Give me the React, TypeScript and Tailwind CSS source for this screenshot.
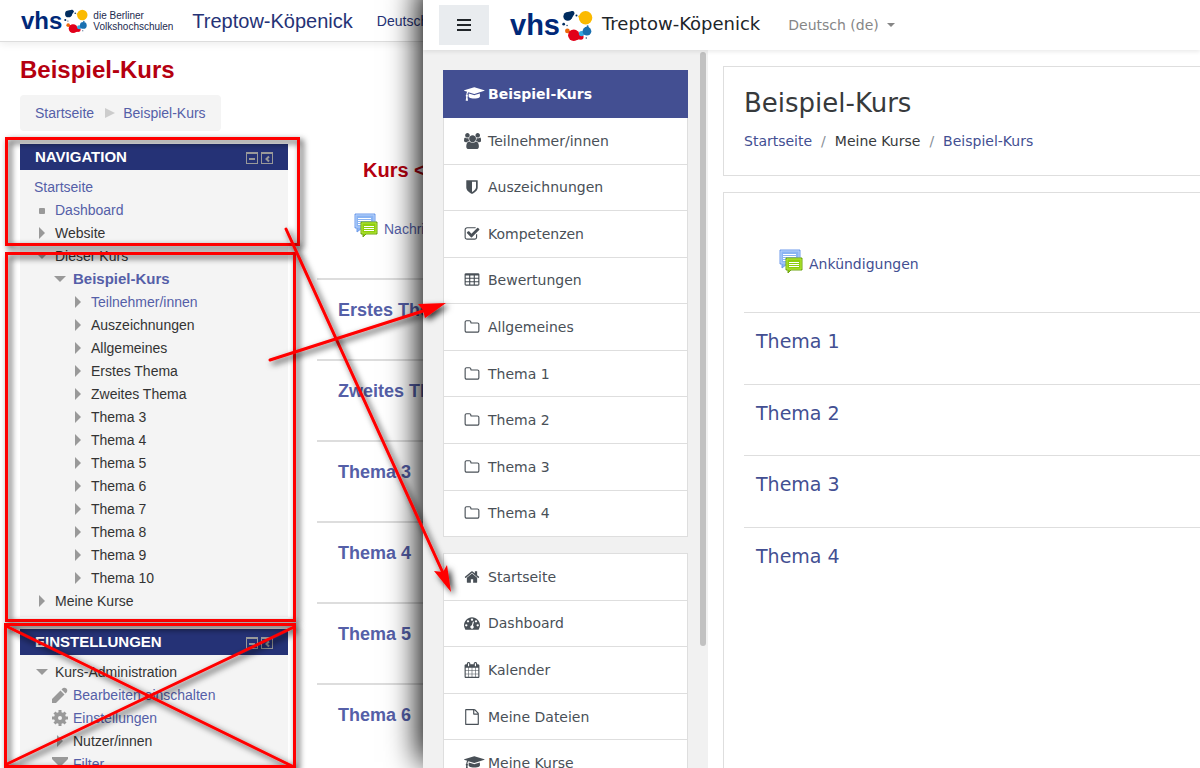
import type { ReactNode } from 'react';

/* ---------- icons ---------- */

interface Glyph {
  width: number;
  path: string;
}

const GLYPHS: Record<string, Glyph> = {
  cap: {
    width: 2304,
    path: 'M1774 836l18 316q4 69-82 128t-235 93.5-323 34.5-323-34.5-235-93.5-82-128l18-316 574 181q22 7 48 7t48-7zm530-324q0 23-22 31l-1120 352q-4 1-10 1t-10-1l-652-206q-43 34-71 111.5t-34 178.5q63 36 63 109 0 69-58 107l58 433q2 14-8 25-9 11-24 11h-192q-15 0-24-11-10-11-8-25l58-433q-58-38-58-107 0-73 65-111 11-207 98-330l-333-104q-22-8-22-31t22-31l1120-352q4-1 10-1t10 1l1120 352q22 8 22 31z',
  },
  users: {
    width: 1920,
    path: 'M593 896q-162 5-265 128h-134q-82 0-138-40.5t-56-118.5q0-353 124-353 6 0 43.5 21t97.5 42.5 119 21.5q67 0 133-23-5 37-5 66 0 139 81 256zm1071 637q0 120-73 189.5t-194 69.5h-874q-121 0-194-69.5t-73-189.5q0-53 3.5-103.5t14-109 26.5-108.5 43-97.5 62-81 85.5-53.5 111.5-20q10 0 43 21.5t73 48 107 48 135 21.5 135-21.5 107-48 73-48 43-21.5q61 0 111.5 20t85.5 53.5 62 81 43 97.5 26.5 108.5 14 109 3.5 103.5zm-1024-1277q0 106-75 181t-181 75-181-75-75-181 75-181 181-75 181 75 75 181zm704 384q0 159-112.5 271.5t-271.5 112.5-271.5-112.5-112.5-271.5 112.5-271.5 271.5-112.5 271.5 112.5 112.5 271.5zm576 225q0 78-56 118.5t-138 40.5h-134q-103-123-265-128 81-117 81-256 0-29-5-66 66 23 133 23 59 0 119-21.5t97.5-42.5 43.5-21q124 0 124 353zm-128-609q0 106-75 181t-181 75-181-75-75-181 75-181 181-75 181 75 75 181z',
  },
  shield: {
    width: 1792,
    path: 'M1344 960v-640h-448v1137q119-63 213-137 235-184 235-360zm192-768v768q0 86-33.5 170.5t-83 150-118 127.5-126.5 103-121 77.5-89.5 49.5-42.5 20q-12 6-26 6t-26-6q-16-7-42.5-20t-89.5-49.5-121-77.5-126.5-103-118-127.5-83-150-33.5-170.5v-768q0-26 19-45t45-19h1152q26 0 45 19t19 45z',
  },
  check: {
    width: 1792,
    path: 'M1472 930v318q0 119-84.5 203.5t-203.5 84.5h-832q-119 0-203.5-84.5t-84.5-203.5v-832q0-119 84.5-203.5t203.5-84.5h832q63 0 117 25 15 7 18 23 3 17-9 29l-49 49q-10 10-23 10-3 0-9-2-23-6-45-6h-832q-66 0-113 47t-47 113v832q0 66 47 113t113 47h832q66 0 113-47t47-113v-254q0-13 9-22l64-64q10-10 23-10 6 0 12 3 20 8 20 29zm231-489l-814 814q-24 24-57 24t-57-24l-430-430q-24-24-24-57t24-57l110-110q24-24 57-24t57 24l263 263 647-647q24-24 57-24t57 24l110 110q24 24 24 57t-24 57z',
  },
  table: {
    width: 1792,
    path: 'M576 1376v-192q0-14-9-23t-23-9h-320q-14 0-23 9t-9 23v192q0 14 9 23t23 9h320q14 0 23-9t9-23zm0-384v-192q0-14-9-23t-23-9h-320q-14 0-23 9t-9 23v192q0 14 9 23t23 9h320q14 0 23-9t9-23zm512 384v-192q0-14-9-23t-23-9h-320q-14 0-23 9t-9 23v192q0 14 9 23t23 9h320q14 0 23-9t9-23zm-512-768v-192q0-14-9-23t-23-9h-320q-14 0-23 9t-9 23v192q0 14 9 23t23 9h320q14 0 23-9t9-23zm512 384v-192q0-14-9-23t-23-9h-320q-14 0-23 9t-9 23v192q0 14 9 23t23 9h320q14 0 23-9t9-23zm512 384v-192q0-14-9-23t-23-9h-320q-14 0-23 9t-9 23v192q0 14 9 23t23 9h320q14 0 23-9t9-23zm-512-768v-192q0-14-9-23t-23-9h-320q-14 0-23 9t-9 23v192q0 14 9 23t23 9h320q14 0 23-9t9-23zm512 384v-192q0-14-9-23t-23-9h-320q-14 0-23 9t-9 23v192q0 14 9 23t23 9h320q14 0 23-9t9-23zm0-384v-192q0-14-9-23t-23-9h-320q-14 0-23 9t-9 23v192q0 14 9 23t23 9h320q14 0 23-9t9-23zm128-320v1088q0 66-47 113t-113 47h-1344q-66 0-113-47t-47-113v-1088q0-66 47-113t113-47h1344q66 0 113 47t47 113z',
  },
  folder: {
    width: 1792,
    path: 'M1600 1312v-704q0-40-28-68t-68-28h-704q-40 0-68-28t-28-68v-64q0-40-28-68t-68-28h-320q-40 0-68 28t-28 68v960q0 40 28 68t68 28h1216q40 0 68-28t28-68zm128-704v704q0 92-66 158t-158 66h-1216q-92 0-158-66t-66-158v-960q0-92 66-158t158-66h320q92 0 158 66t66 158v32h672q92 0 158 66t66 158z',
  },
  home: {
    width: 1792,
    path: 'M1472 992v480q0 26-19 45t-45 19h-384v-384h-256v384h-384q-26 0-45-19t-19-45v-480q0-1 .5-3t.5-3l575-474 575 474q1 2 1 6zm223-69l-62 74q-8 9-21 11h-3q-13 0-21-7l-692-577-692 577q-12 8-24 7-13-2-21-11l-62-74q-8-10-7-23.5t11-21.5l719-599q32-26 76-26t76 26l244 204v-195q0-14 9-23t23-9h192q14 0 23 9t9 23v408l219 182q10 8 11 21.5t-7 23.5z',
  },
  dashboard: {
    width: 1792,
    path: 'M384 1152q0-53-37.5-90.5t-90.5-37.5-90.5 37.5-37.5 90.5 37.5 90.5 90.5 37.5 90.5-37.5 37.5-90.5zm192-448q0-53-37.5-90.5t-90.5-37.5-90.5 37.5-37.5 90.5 37.5 90.5 90.5 37.5 90.5-37.5 37.5-90.5zm428 481l101-382q6-26-7.5-48.5t-38.5-29.5-48 6.5-30 39.5l-101 382q-60 5-107 43.5t-63 98.5q-20 77 20 146t117 89 146-20 89-117q16-60-6-117t-72-91zm660-33q0-53-37.5-90.5t-90.5-37.5-90.5 37.5-37.5 90.5 37.5 90.5 90.5 37.5 90.5-37.5 37.5-90.5zm-640-640q0-53-37.5-90.5t-90.5-37.5-90.5 37.5-37.5 90.5 37.5 90.5 90.5 37.5 90.5-37.5 37.5-90.5zm448 192q0-53-37.5-90.5t-90.5-37.5-90.5 37.5-37.5 90.5 37.5 90.5 90.5 37.5 90.5-37.5 37.5-90.5zm320 448q0 261-141 483-19 29-54 29h-1402q-35 0-54-29-141-221-141-483 0-182 71-348t191-286 286-191 348-71 348 71 286 191 191 286 71 348z',
  },
  calendar: {
    width: 1792,
    path: 'M192 1664h288v-288h-288v288zm352 0h320v-288h-320v288zm-352-352h288v-320h-288v320zm352 0h320v-320h-320v320zm-352-384h288v-288h-288v288zm736 736h320v-288h-320v288zm-384-736h320v-288h-320v288zm768 736h288v-288h-288v288zm-384-352h320v-320h-320v320zm-352-864v-288q0-13-9.5-22.5t-22.5-9.5h-64q-13 0-22.5 9.5t-9.5 22.5v288q0 13 9.5 22.5t22.5 9.5h64q13 0 22.5-9.5t9.5-22.5zm736 864h288v-320h-288v320zm-384-384h320v-288h-320v288zm384 0h288v-288h-288v288zm32-480v-288q0-13-9.5-22.5t-22.5-9.5h-64q-13 0-22.5 9.5t-9.5 22.5v288q0 13 9.5 22.5t22.5 9.5h64q13 0 22.5-9.5t9.5-22.5zm384-64v1280q0 52-38 90t-90 38h-1408q-52 0-90-38t-38-90v-1280q0-52 38-90t90-38h128v-96q0-66 47-113t113-47h64q66 0 113 47t47 113v96h384v-96q0-66 47-113t113-47h64q66 0 113 47t47 113v96h128q52 0 90 38t38 90z',
  },
  file: {
    width: 1792,
    path: 'M1596 380q28 28 48 76t20 88v1152q0 40-28 68t-68 28h-1344q-40 0-68-28t-28-68v-1600q0-40 28-68t68-28h896q40 0 88 20t76 48zm-444-244v376h376q-10-29-22-41l-313-313q-12-12-41-22zm384 1528v-1024h-416q-40 0-68-28t-28-68v-416h-768v1536h1280z',
  },
};

function Icon({ name }: { name: string }) {
  const { width, path } = GLYPHS[name];
  return (
    <span className="flex h-4 w-4 shrink-0 items-center" aria-hidden="true">
      <svg viewBox={`0 0 ${width} 1792`} className="h-4 w-auto max-w-none shrink-0" fill="currentColor">
        <path d={path} />
      </svg>
    </span>
  );
}

function LogoDots({ className }: { className: string }) {
  return (
    <svg viewBox="0 0 92 92" className={className} aria-hidden="true">
      <g fill="#002c5f">
        <circle cx="17" cy="19" r="13" />
        <circle cx="31" cy="9" r="6" />
        <path d="M17 6L31 3l6 8-9 16z" />
        <circle cx="43" cy="16" r="3" />
        <circle cx="5" cy="42" r="4" />
        <circle cx="15" cy="46" r="2" />
        <circle cx="72" cy="83" r="2" />
      </g>
      <circle cx="51" cy="19" r="3" fill="#fbba00" />
      <circle cx="70" cy="23" r="20" fill="#fbba00" />
      <circle cx="16" cy="62" r="7" fill="#ec6608" />
      <path d="M35 60l-16 2 6 12z" fill="#ec6608" />
      <g fill="#e2001a">
        <circle cx="35" cy="75" r="17" />
        <circle cx="56" cy="80" r="8" />
        <path d="M45 66l14 8-6 13-12 2z" />
      </g>
      <circle cx="58" cy="70" r="8" fill="#36a9e1" />
      <circle cx="74" cy="63" r="13" fill="#1a70b0" />
      <circle cx="76" cy="48" r="3" fill="#1a70b0" />
    </svg>
  );
}

function ForumIcon() {
  return (
    <svg viewBox="0 0 24 24" className="h-6 w-6 shrink-0" aria-hidden="true">
      <path d="M1 1h20v14H8l-5 4v-4H1z" fill="#8ab4f3" stroke="#6e9bea" />
      <path d="M2 2h18v12H2z" fill="none" stroke="#b5d0fa" />
      <path d="M4 5.500h13M4 7.500h13M4 9.500h4M4 11.500h3" stroke="#fff" />
      <path d="M7 9h16v12H12l-3 3v-3H7z" fill="#8fce0c" stroke="#6ea314" />
      <path d="M8 10h14v10H8z" fill="none" stroke="#b4e63c" />
      <path d="M10 13.500h10M10 15.500h10M10 17.500h10" stroke="#fff" />
    </svg>
  );
}

type Marker = 'open' | 'closed' | 'dot' | 'pen' | 'cog' | 'filter';

function TreeMarker({ kind }: { kind: Marker }) {
  if (kind === 'pen' || kind === 'cog' || kind === 'filter') {
    return (
      <svg viewBox="0 0 16 16" className="h-4 w-4" fill="#999" aria-hidden="true">
        {kind === 'pen' && (
          <>
            <path d="M0 16v-4l8.500-8.500 4 4L4 16z" />
            <path d="M9.500 2.500l1.500-1.500a3 3 0 0 1 4 4l-1.500 1.500z" />
          </>
        )}
        {kind === 'cog' && (
          <g fill="none" stroke="#999">
            <circle cx="8" cy="8" r="4" strokeWidth="4" />
            <path d="M8 0v4M8 12v4M0 8h4M12 8h4M2.500 2.500l3 3M10.500 10.500l3 3M13.500 2.500l-3 3M5.500 10.500l-3 3" strokeWidth="3" />
          </g>
        )}
        {kind === 'filter' && <path d="M0 1h16v2l-6 6v7H6V9L0 3z" />}
      </svg>
    );
  }
  return (
    <svg viewBox="0 0 12 12" className="h-3 w-3" fill="#999" aria-hidden="true">
      {kind === 'open' && <path d="M0 3h12L6 9z" />}
      {kind === 'closed' && <path d="M3 0v12l6-6z" />}
      {kind === 'dot' && <rect x="3" y="4" width="6" height="6" rx="1" />}
    </svg>
  );
}

/* ---------- old course page ---------- */

interface TreeItem {
  label: string;
  level: number;
  marker?: Marker;
  link?: boolean;
  bold?: boolean;
}

const NAV_TREE: TreeItem[] = [
  { label: 'Startseite', level: 0, link: true },
  { label: 'Dashboard', level: 1, marker: 'dot', link: true },
  { label: 'Website', level: 1, marker: 'closed' },
  { label: 'Dieser Kurs', level: 1, marker: 'open' },
  { label: 'Beispiel-Kurs', level: 2, marker: 'open', link: true, bold: true },
  { label: 'Teilnehmer/innen', level: 3, marker: 'closed', link: true },
  { label: 'Auszeichnungen', level: 3, marker: 'closed' },
  { label: 'Allgemeines', level: 3, marker: 'closed' },
  { label: 'Erstes Thema', level: 3, marker: 'closed' },
  { label: 'Zweites Thema', level: 3, marker: 'closed' },
  { label: 'Thema 3', level: 3, marker: 'closed' },
  { label: 'Thema 4', level: 3, marker: 'closed' },
  { label: 'Thema 5', level: 3, marker: 'closed' },
  { label: 'Thema 6', level: 3, marker: 'closed' },
  { label: 'Thema 7', level: 3, marker: 'closed' },
  { label: 'Thema 8', level: 3, marker: 'closed' },
  { label: 'Thema 9', level: 3, marker: 'closed' },
  { label: 'Thema 10', level: 3, marker: 'closed' },
  { label: 'Meine Kurse', level: 1, marker: 'closed' },
];

const SETTINGS_TREE: TreeItem[] = [
  { label: 'Kurs-Administration', level: 1, marker: 'open' },
  { label: 'Bearbeiten einschalten', level: 2, marker: 'pen', link: true },
  { label: 'Einstellungen', level: 2, marker: 'cog', link: true },
  { label: 'Nutzer/innen', level: 2, marker: 'closed' },
  { label: 'Filter', level: 2, marker: 'filter', link: true },
];

const INDENT = ['pl-[14px]', 'pl-3', 'pl-[30px]', 'pl-12'];

function Tree({ items }: { items: TreeItem[] }) {
  return (
    <ul className="pt-[5px] pb-[5px]">
      {items.map((item) => (
        <li key={item.label} className={`flex h-[23px] items-center whitespace-nowrap ${INDENT[item.level]}`}>
          {item.marker && (
            <span className="mr-[3px] flex w-5 justify-center">
              <TreeMarker kind={item.marker} />
            </span>
          )}
          {item.link ? (
            <a href="#" className={item.bold ? 'text-[15px] font-bold text-[#555fa8]' : 'text-[#555fa8]'}>
              {item.label}
            </a>
          ) : (
            <span>{item.label}</span>
          )}
        </li>
      ))}
    </ul>
  );
}

function Block({ title, children }: { title: string; children: ReactNode }) {
  return (
    <section className="bg-[#f4f4f4]">
      <div className="flex h-[26px] items-center justify-between bg-[#253276] px-[15px] text-white">
        <h2 className="text-[15px] font-bold">{title}</h2>
        <div className="flex gap-[3px] pt-[2px]">
          <button type="button" aria-label="Block verbergen">
            <svg viewBox="0 0 12 12" className="h-3 w-3" fill="none" stroke="#999">
              <rect x=".5" y=".5" width="11" height="11" />
              <path d="M0 1.500h12" />
              <path d="M3 7h6" strokeWidth="2" />
            </svg>
          </button>
          <button type="button" aria-label="Block andocken">
            <svg viewBox="0 0 12 12" className="h-3 w-3" fill="none" stroke="#999">
              <rect x=".5" y=".5" width="11" height="11" />
              <path d="M0 1.500h12" />
              <path d="M8 4.500L5.500 7 8 9.500" strokeWidth="2" />
            </svg>
          </button>
        </div>
      </div>
      {children}
    </section>
  );
}

const OLD_TOPICS = ['Erstes Thema', 'Zweites Thema', 'Thema 3', 'Thema 4', 'Thema 5', 'Thema 6'];

function OldPage() {
  return (
    <div className="w-[423px] shrink-0 overflow-hidden bg-white font-['Liberation_Sans',Arial,sans-serif] text-sm text-[#333]">
      <header className="flex h-[42px] items-center border-b border-[#ddd] pl-[21px] whitespace-nowrap shadow-[0_2px_8px_rgba(0,0,0,0.08)]">
        <span className="text-2xl leading-6 font-bold text-[#002878]">vhs</span>
        <LogoDots className="ml-[2px] h-6 w-6 shrink-0" />
        <span className="ml-[5px] w-[99px] shrink-0 text-[10px] leading-[11px] text-[#1c2b4f]">
          die Berliner
          <br />
          Volkshochschulen
        </span>
        <span className="text-xl text-[#253276]">Treptow-Köpenick</span>
        <a href="#" className="ml-6 text-[#253276]">
          Deutsch (de)
        </a>
      </header>

      <h1 className="mt-3 pl-5 text-2xl leading-8 font-bold text-[#b5000f]">Beispiel-Kurs</h1>
      <nav
        aria-label="Pfad"
        className="mt-[9px] ml-5 flex h-9 w-[201px] items-center gap-[11px] rounded bg-[#f4f4f4] pl-[15px] whitespace-nowrap text-[#555fa8]"
      >
        <a href="#">Startseite</a>
        <span className="flex items-center gap-2">
          <svg viewBox="0 0 10 10" className="h-[10px] w-[10px]" fill="#ccc" aria-hidden="true">
            <path d="M0 0l10 5-10 5z" />
          </svg>
          <a href="#">Beispiel-Kurs</a>
        </span>
      </nav>

      <div className="mt-[13px] flex">
        <aside className="ml-5 flex w-[268px] shrink-0 flex-col gap-3">
          <Block title="NAVIGATION">
            <Tree items={NAV_TREE} />
          </Block>
          <Block title="EINSTELLUNGEN">
            <Tree items={SETTINGS_TREE} />
          </Block>
        </aside>
        <main className="ml-[29px] grow whitespace-nowrap">
          <h2 className="mt-3 pl-[46px] text-xl leading-7 font-bold text-[#b5000f]">Kurs &lt;&lt;</h2>
          <a href="#" className="mt-[27px] mb-[39px] flex items-center gap-[6px] pl-[37px] text-[#555fa8]">
            <ForumIcon />
            <span className="pt-2">Nachrichtenforum</span>
          </a>
          {OLD_TOPICS.map((topic) => (
            <section key={topic} className="h-[81px] border-t-2 border-[#ddd] pt-4 pl-[21px]">
              <h3 className="text-lg leading-7 font-bold text-[#555fa8]">{topic}</h3>
            </section>
          ))}
        </main>
      </div>
    </div>
  );
}

/* ---------- new course page ---------- */

interface DrawerItem {
  icon: string;
  label: string;
}

const COURSE_ITEMS: DrawerItem[] = [
  { icon: 'users', label: 'Teilnehmer/innen' },
  { icon: 'shield', label: 'Auszeichnungen' },
  { icon: 'check', label: 'Kompetenzen' },
  { icon: 'table', label: 'Bewertungen' },
  { icon: 'folder', label: 'Allgemeines' },
  { icon: 'folder', label: 'Thema 1' },
  { icon: 'folder', label: 'Thema 2' },
  { icon: 'folder', label: 'Thema 3' },
  { icon: 'folder', label: 'Thema 4' },
];

const SITE_ITEMS: DrawerItem[] = [
  { icon: 'home', label: 'Startseite' },
  { icon: 'dashboard', label: 'Dashboard' },
  { icon: 'calendar', label: 'Kalender' },
  { icon: 'file', label: 'Meine Dateien' },
  { icon: 'cap', label: 'Meine Kurse' },
];

function DrawerRow({ icon, label }: DrawerItem) {
  return (
    <a
      href="#"
      className="flex flex-1 items-center gap-2 border-x border-b border-[#dedede] bg-white pl-5 text-[#495057]"
    >
      <Icon name={icon} />
      {label}
    </a>
  );
}

const NEW_TOPICS = ['Thema 1', 'Thema 2', 'Thema 3', 'Thema 4'];

function NewPage() {
  return (
    <div className="relative flex min-w-0 grow flex-col bg-white font-['DejaVu_Sans',Verdana,sans-serif] text-sm text-[#373a3c] shadow-[0_-10px_30px_4px_#000]">
      <header className="relative z-10 flex h-[50px] shrink-0 items-center bg-white pl-4 whitespace-nowrap shadow-[0_2px_4px_rgba(0,0,0,0.08)]">
        <button
          type="button"
          aria-label="Navigation"
          className="flex h-10 w-[50px] items-center justify-center bg-[#e9ecef]"
        >
          <svg viewBox="0 0 14 12" className="h-3 w-[14px]" fill="#212529">
            <path d="M0 0h14v2H0zM0 5h14v2H0zM0 10h14v2H0z" />
          </svg>
        </button>
        <span className="ml-[21px] font-['Liberation_Sans',Arial,sans-serif] text-[29px] leading-7 font-bold text-[#002878]">
          vhs
        </span>
        <LogoDots className="ml-[2px] h-[31px] w-[31px] shrink-0" />
        <span className="ml-[9px] pb-[2px] text-lg text-[#212529]">Treptow-Köpenick</span>
        <button type="button" className="ml-7 flex items-center gap-2 text-[#868686]">
          Deutsch (de)
          <svg viewBox="0 0 8 4" className="h-1 w-2" fill="#868686" aria-hidden="true">
            <path d="M0 0h8L4 4z" />
          </svg>
        </button>
      </header>

      <div className="flex min-h-0 grow">
        <aside className="flex w-[285px] shrink-0 gap-3 overflow-hidden bg-[#f1f1f1] pl-5">
          <div className="w-[245px] pt-5">
            <nav aria-label="Kurs" className="flex h-[467px] flex-col">
              <a href="#" className="flex h-12 shrink-0 items-center gap-2 bg-[#434f92] pl-[21px] font-bold text-white">
                <Icon name="cap" />
                Beispiel-Kurs
              </a>
              {COURSE_ITEMS.map((item) => (
                <DrawerRow key={item.label} {...item} />
              ))}
            </nav>
            <nav aria-label="Website" className="mt-4 flex h-[234px] flex-col border-t border-[#dedede]">
              {SITE_ITEMS.map((item) => (
                <DrawerRow key={item.label} {...item} />
              ))}
            </nav>
          </div>
          <div className="mt-[2px] h-[594px] w-[6px] rounded-full bg-[#c1c1c1]" />
        </aside>

        <main className="flex min-w-0 grow flex-col gap-4 overflow-hidden pt-4 pl-[15px]">
          <section className="h-[110px] shrink-0 border border-r-0 border-[#dedede] px-5 pt-5">
            <h1 className="text-[26px] leading-8">Beispiel-Kurs</h1>
            <nav aria-label="Pfad" className="mt-3 flex gap-[9px] leading-5 text-[#434f92]">
              <a href="#">Startseite</a>
              <span className="text-[#868e96]">/</span>
              <span className="text-[#373a3c]">Meine Kurse</span>
              <span className="text-[#868e96]">/</span>
              <a href="#">Beispiel-Kurs</a>
            </nav>
          </section>

          <section className="grow border border-r-0 border-b-0 border-[#dedede] pt-[55px] pl-5">
            <a href="#" className="mb-[38px] flex items-center gap-[6px] pl-[35px] text-[#434f92]">
              <ForumIcon />
              <span className="pt-[6px]">Ankündigungen</span>
            </a>
            <div className="flex h-[286px] flex-col">
              {NEW_TOPICS.map((topic) => (
                <section key={topic} className="flex-1 border-t border-[#dedede] pt-[14px] pl-3">
                  <h2 className="text-[19px] leading-7 text-[#434f92]">{topic}</h2>
                </section>
              ))}
            </div>
          </section>
        </main>
      </div>
    </div>
  );
}

/* ---------- red markings over both pages ---------- */

function Markings() {
  return (
    <svg className="pointer-events-none absolute top-0 left-0 h-[768px] w-[500px]" viewBox="0 0 500 768" aria-hidden="true">
      <defs>
        <filter id="drop" x="-10%" y="-20%" width="120%" height="140%">
          <feDropShadow dx="3" dy="3" stdDeviation="3" floodColor="#000" floodOpacity="0.8" />
        </filter>
      </defs>
      <g fill="none" stroke="#f00" strokeWidth="3">
        <rect x="6.500" y="138.500" width="292" height="106" filter="url(#drop)" />
        <rect x="6.500" y="253.500" width="288" height="367" filter="url(#drop)" />
        <g filter="url(#drop)">
          <rect x="5.500" y="624.500" width="289" height="142" />
          <path d="M6 626l288 141M294 627L7 764" strokeLinecap="round" />
        </g>
        <g filter="url(#drop)">
          <path d="M286 229l157 344" strokeLinecap="round" />
          <path d="M451 592l-17-21 9 1 4-7z" fill="#f00" stroke="none" />
        </g>
        <g filter="url(#drop)">
          <path d="M270 360l153-49" strokeLinecap="round" />
          <path d="M446 303l-21 15-2-8-5-6z" fill="#f00" stroke="none" />
        </g>
      </g>
    </svg>
  );
}

export default function App() {
  return (
    <div className="relative flex h-screen overflow-hidden bg-white">
      <OldPage />
      <NewPage />
      <Markings />
    </div>
  );
}
